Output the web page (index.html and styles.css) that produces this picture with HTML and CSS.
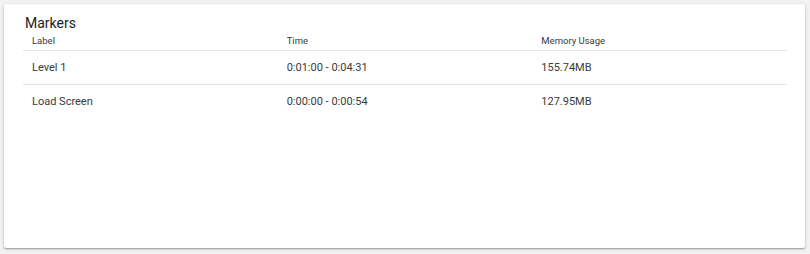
FILE: index.html
```html
<!DOCTYPE html>
<html lang="en">
<head>
    <meta charset="UTF-8">
    <meta name="viewport" content="width=device-width, initial-scale=1.0">
    <title>Markers</title>
    <link rel="stylesheet" href="styles.css">
</head>
<body>
    <div class="card">
        <h2 class="card-title">Markers</h2>
        <table class="markers">
            <thead>
                <tr>
                    <th>Label</th>
                    <th>Time</th>
                    <th>Memory Usage</th>
                </tr>
            </thead>
            <tbody>
                <tr>
                    <td>Level 1</td>
                    <td>0:01:00 - 0:04:31</td>
                    <td>155.74MB</td>
                </tr>
                <tr>
                    <td>Load Screen</td>
                    <td>0:00:00 - 0:00:54</td>
                    <td>127.95MB</td>
                </tr>
            </tbody>
        </table>
    </div>
</body>
</html>
```

FILE: styles.css
```css
html, body {
    height: 100%;
}
body {
    font-family: Roboto, 'Liberation Sans', sans-serif;
    background-color: #f2f2f2;
    margin: 0;
    padding: 4px 5px 6px 4px;
    box-sizing: border-box;
    display: flex;
}
.card {
    flex: 1;
    background: white;
    border-radius: 2px;
    box-shadow: 0 1px 3px rgba(0, 0, 0, 0.25), 0 1px 1px rgba(0, 0, 0, 0.18);
    padding: 0 18px 0 19px;
}
.card-title {
    margin: 0;
    padding: 12px 0 0 2px;
    font-size: 14px;
    font-weight: 400;
    line-height: 15px;
    color: #222;
}
.markers {
    width: 100%;
    border-collapse: collapse;
    table-layout: fixed;
}
.markers th {
    text-align: left;
    font-size: 9.5px;
    font-weight: 400;
    color: #3a3a3a;
    height: 19px;
    padding: 0 0 0 9px;
    vertical-align: middle;
    border-bottom: 1px solid #e3e3ea;
}
.markers td {
    font-size: 11px;
    color: #3a3a3a;
    height: 33px;
    padding: 0 0 0 9px;
    border-bottom: 1px solid #e3e3ea;
}
.markers tbody tr:last-child td {
    border-bottom: none;
}
```
